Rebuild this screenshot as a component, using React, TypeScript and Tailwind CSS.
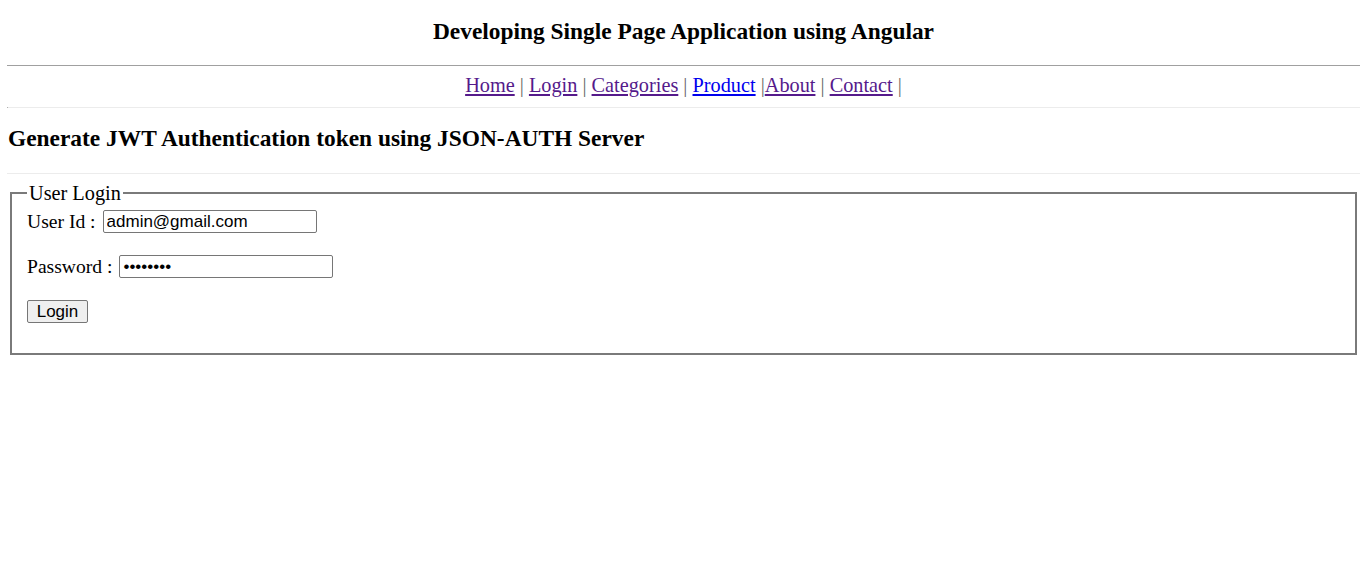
import React from 'react';

const links = [
  { label: 'Home', color: 'text-[#551a8b]', sep: ' | ' },
  { label: 'Login', color: 'text-[#551a8b]', sep: ' | ' },
  { label: 'Categories', color: 'text-[#551a8b]', sep: ' | ' },
  { label: 'Product', color: 'text-[#0000ee]', sep: ' |' },
  { label: 'About', color: 'text-[#551a8b]', sep: ' | ' },
  { label: 'Contact', color: 'text-[#551a8b]', sep: ' |' },
];

export default function App() {
  return (
    <div className="min-h-[564px] bg-white pl-[7px] font-['Liberation_Serif',serif] text-[19.6px] text-black">
      <h3 className="flex h-[65px] items-center justify-center pb-[2px] text-[23.4px] font-bold">
        Developing Single Page Application using Angular
      </h3>
      <div className="h-px bg-[#a0a0a0]" />

      <nav className="flex h-[41px] items-center justify-center whitespace-pre pb-[2px] text-[20.3px]">
        {links.map((l) => (
          <span key={l.label}>
            <a href="#" className={`${l.color} underline`}>
              {l.label}
            </a>
            <span className="text-[#666]">{l.sep}</span>
          </span>
        ))}
      </nav>
      <div className="h-px border-l border-[#b0b0b0] bg-[#ececec]" />

      <h3 className="flex h-[65px] items-center pb-[3px] pl-[1px] text-[23.4px] font-bold">
        Generate JWT Authentication token using JSON-AUTH Server
      </h3>
      <div className="h-px bg-[#ececec]" />

      <fieldset className="mx-[3px] mt-[8px] border-2 border-[#7a7a7a] pl-[15px] pr-[15px] pb-[29px] pt-[5px]">
        <legend className="px-[2px] text-[20.3px] leading-[22px]">User Login</legend>
        <div className="flex h-[25px] items-center gap-[7px]">
          <span>User Id :</span>
          <input
            type="text"
            defaultValue="admin@gmail.com"
            className="h-[23px] w-[214px] rounded-[2px] border border-[#767676] px-[3px] font-['Liberation_Sans',sans-serif] text-[17px] outline-none"
          />
        </div>
        <div className="mt-[20px] flex h-[25px] items-center gap-[7px]">
          <span>Password :</span>
          <input
            type="password"
            defaultValue="password"
            className="h-[23px] w-[214px] rounded-[2px] border border-[#767676] px-[3px] font-['Liberation_Sans',sans-serif] text-[17px] outline-none"
          />
        </div>
        <div className="mt-[20px] flex h-[25px] items-center">
          <button className="h-[23px] w-[61px] rounded-[2px] border border-[#767676] bg-[#efefef] font-['Liberation_Sans',sans-serif] text-[17px] leading-none">
            Login
          </button>
        </div>
      </fieldset>
    </div>
  );
}
